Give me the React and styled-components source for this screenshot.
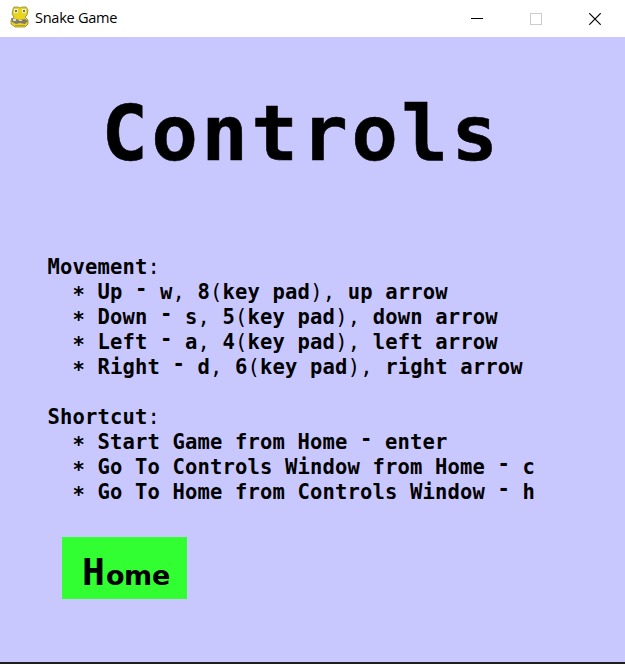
import React from "react";
import styled, { createGlobalStyle } from "styled-components";

const GlobalStyle = createGlobalStyle`
  * { box-sizing: border-box; }
  body { margin: 0; background: #c8c8ff; overflow: hidden; }
`;

const Window = styled.div`
  display: flex;
  flex-direction: column;
  width: 625px;
  height: 664px;
  background: #c8c8ff;
  border-bottom: 2px solid #1e1e1e;
  color: #000;
`;

const TitleBar = styled.header`
  display: flex;
  align-items: center;
  flex: none;
  height: 37px;
  padding-left: 10px;
  background: #fff;
`;

const AppIcon = styled.svg`
  flex: none;
  width: 20px;
  height: 22px;
  margin-top: -3px;
`;

const AppName = styled.span`
  flex: 1;
  margin: -3px 0 0 5px;
  font: 14.6px/20px "Open Sans", "Noto Sans", sans-serif;
  letter-spacing: -0.3px;
`;

const WindowButton = styled.button`
  display: flex;
  align-items: center;
  justify-content: center;
  width: 58.5px;
  height: 37px;
  padding: 0;
  border: 0;
  background: none;
  color: ${(p) => (p.$muted ? "#ccc" : "#000")};

  &:last-child { width: 60px; }
`;

const Screen = styled.main`
  display: flex;
  flex-direction: column;
  align-items: flex-start;
  font-family: "DejaVu Sans Mono", monospace;
  font-weight: 700;
`;

const Heading = styled.h1`
  margin: 52px 0 0 101.5px;
  font-size: 77px;
  line-height: 90px;
  letter-spacing: 3.64px;
  -webkit-text-stroke: 0.6px #000;
`;

const Instructions = styled.section`
  display: flex;
  flex-direction: column;
  gap: 25px;
  margin: 76px 0 0 47.5px;
  font-size: 20.5px;
  line-height: 25px;
  letter-spacing: 0.16px;
  white-space: pre;
`;

const GroupTitle = styled.h2`
  margin: 0;
  font: inherit;
`;

const List = styled.ul`
  margin: 0;
  padding: 0 0 0 25px;
  list-style: none;
`;

const Mark = styled.span`
  display: inline-block;
  font-weight: ${(p) => ("-*".includes(p.$char) ? 700 : 400)};
  transform: translateY(${(p) => ({ "-": "-3px", "*": "3px" }[p.$char] || "0")});
`;

const HomeButton = styled.button`
  display: flex;
  align-items: baseline;
  width: 125px;
  height: 62px;
  margin: 32px 0 0 62.4px;
  padding: 13px 0 0 19.6px;
  border: 0;
  background: #32ff32;
  color: #000;
  font: 700 38px/44px "DejaVu Sans Mono", monospace;
`;

const SmallLetters = styled.span`
  margin-left: 1px;
  font: 700 27px/44px "DejaVu Sans", sans-serif;
  letter-spacing: -0.3px;
`;

const groups = [
  {
    title: "Movement:",
    items: [
      "Up - w, 8(key pad), up arrow",
      "Down - s, 5(key pad), down arrow",
      "Left - a, 4(key pad), left arrow",
      "Right - d, 6(key pad), right arrow",
    ],
  },
  {
    title: "Shortcut:",
    items: [
      "Start Game from Home - enter",
      "Go To Controls Window from Home - c",
      "Go To Home from Controls Window - h",
    ],
  },
];

const Line = ({ text }) =>
  text.split(/([-*(),:])/).map((part, i) =>
    i % 2 ? <Mark key={i} $char={part}>{part}</Mark> : part
  );

const SnakeIcon = () => (
  <AppIcon viewBox="0 0 20 22">
    <path d="M4 1h4l2 1 2-1h4l2 3-1 5-2 2 3 3v4l-3 3H5l-4-3v-4l3-3-2-3 1-5z" fill="#ead51b" stroke="#81791f" strokeWidth=".7" />
    <path d="M4 3h4v4H4zM12 3h4v4h-4z" fill="#e9ecd2" />
    <path d="M5 4h2v2H5zM13 4h2v2h-2z" fill="#73785c" />
    <path d="M1 12l5 1 3 1 6-1 3 2-3 3-5-1-4 1-4-2z" fill="#807a70" />
    <path d="M3 13h3v2H3zM9 14h3v1H9z" fill="#ddd" />
    <path d="M5 19h10v1H5z" fill="#b4a71a" />
  </AppIcon>
);

export default function App() {
  return (
    <>
      <GlobalStyle />
      <Window>
        <TitleBar>
          <SnakeIcon />
          <AppName>Snake Game</AppName>
          <WindowButton aria-label="Minimize">
            <svg width="12" height="12" shapeRendering="crispEdges"><path d="M0 5.5h12" stroke="currentColor" /></svg>
          </WindowButton>
          <WindowButton $muted disabled aria-label="Maximize">
            <svg width="12" height="12" shapeRendering="crispEdges"><path d="M.5.5h11v11H.5z" fill="none" stroke="currentColor" /></svg>
          </WindowButton>
          <WindowButton aria-label="Close">
            <svg width="12" height="12"><path d="M.3.3l11.4 11.4M11.7.3L.3 11.7" stroke="currentColor" strokeWidth="1.2" /></svg>
          </WindowButton>
        </TitleBar>
        <Screen>
          <Heading>Controls</Heading>
          <Instructions>
            {groups.map((group) => (
              <div key={group.title}>
                <GroupTitle><Line text={group.title} /></GroupTitle>
                <List>
                  {group.items.map((item) => (
                    <li key={item}><Line text={`* ${item}`} /></li>
                  ))}
                </List>
              </div>
            ))}
          </Instructions>
          <HomeButton>
            H<SmallLetters>ome</SmallLetters>
          </HomeButton>
        </Screen>
      </Window>
    </>
  );
}
